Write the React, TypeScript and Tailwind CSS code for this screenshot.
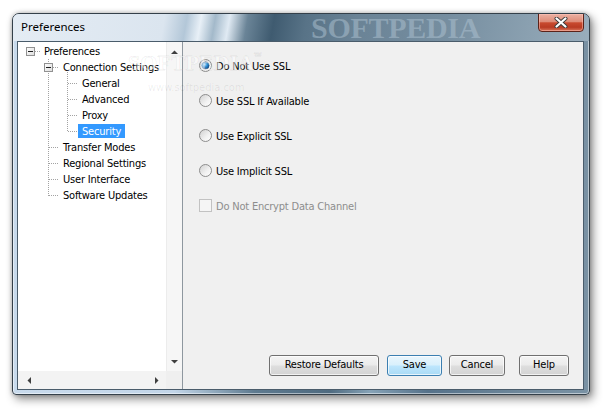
import React from "react";

type Row = { label: string; level: 0 | 1 | 2; selected?: boolean };

const rows: Row[] = [
  { label: "Preferences", level: 0 },
  { label: "Connection Settings", level: 1 },
  { label: "General", level: 2 },
  { label: "Advanced", level: 2 },
  { label: "Proxy", level: 2 },
  { label: "Security", level: 2, selected: true },
  { label: "Transfer Modes", level: 1 },
  { label: "Regional Settings", level: 1 },
  { label: "User Interface", level: 1 },
  { label: "Software Updates", level: 1 },
];

const levelPad = ["pl-[22px]", "pl-[41px]", "pl-[60px]"];

function TreeLines() {
  const dot = { stroke: "#a3a3a3", strokeWidth: 1, strokeDasharray: "1 1" };
  const box = (cx: number, cy: number) => (
    <g>
      <rect x={cx - 3.5} y={cy - 3.5} width={8} height={8} fill="url(#boxg)" stroke="#919191" />
      <line x1={cx - 2} x2={cx + 3} y1={cy + 0.5} y2={cy + 0.5} stroke="#1e1e1e" />
    </g>
  );
  return (
    <svg className="absolute inset-0 pointer-events-none" width="148" height="329">
      <defs>
        <linearGradient id="boxg" x1="0" y1="0" x2="1" y2="1">
          <stop offset="0" stopColor="#ffffff" />
          <stop offset="1" stopColor="#dcdcdc" />
        </linearGradient>
      </defs>
      <line x1={17} x2={22} y1={9.5} y2={9.5} {...dot} />
      <line x1={30.5} x2={30.5} y1={17} y2={154} {...dot} />
      {[105, 121, 137, 153].map((y) => (
        <line key={y} x1={31} x2={41} y1={y + 0.5} y2={y + 0.5} {...dot} />
      ))}
      <line x1={35} x2={41} y1={25.5} y2={25.5} {...dot} />
      <line x1={49.5} x2={49.5} y1={30} y2={90} {...dot} />
      {[41, 57, 73, 89].map((y) => (
        <line key={y} x1={50} x2={60} y1={y + 0.5} y2={y + 0.5} {...dot} />
      ))}
      {box(12, 9)}
      {box(30, 25)}
    </svg>
  );
}

function Radio({ checked }: { checked?: boolean }) {
  return (
    <svg width="13" height="13" viewBox="0 0 13 13" className="shrink-0">
      <defs>
        <linearGradient id="rbg" x1="0" y1="0" x2="1" y2="1">
          <stop offset="0" stopColor="#cfcfcf" />
          <stop offset="0.6" stopColor="#f2f2f2" />
          <stop offset="1" stopColor="#ffffff" />
        </linearGradient>
        <radialGradient id="rdot" cx="0.4" cy="0.35" r="0.75">
          <stop offset="0" stopColor="#b4e6ff" />
          <stop offset="0.45" stopColor="#2b8fd6" />
          <stop offset="1" stopColor="#0c3e78" />
        </radialGradient>
      </defs>
      <circle cx="6.5" cy="6.5" r="6" fill="url(#rbg)" stroke="#8d8d8d" />
      {checked && <circle cx="6.5" cy="6.5" r="3.6" fill="url(#rdot)" stroke="#1a4a7c" strokeWidth="0.6" />}
    </svg>
  );
}

function Btn({ children, className }: { children: React.ReactNode; className: string }) {
  return (
    <div
      className={
        "h-[21px] flex items-center justify-center rounded-[3px] text-[11px] tracking-[-0.2px] text-black shadow-[inset_0_0_0_1px_rgba(255,255,255,0.7)] " +
        className
      }
    >
      {children}
    </div>
  );
}

function Arrow({ dir }: { dir: "up" | "down" | "left" | "right" }) {
  const pts = {
    up: "0,4 7,4 3.5,0.5",
    down: "0,0 7,0 3.5,3.5",
    left: "4,0 4,7 0.5,3.5",
    right: "0,0 0,7 3.5,3.5",
  }[dir];
  const vert = dir === "up" || dir === "down";
  return (
    <svg width={vert ? 7 : 4} height={vert ? 4 : 7} className="shrink-0">
      <polygon points={pts} fill="#3f3f3f" />
    </svg>
  );
}

export default function App() {
  return (
    <div className="w-[611px] h-[417px] bg-white pl-[12px] pt-[13px] font-['DejaVu_Sans_Condensed','DejaVu_Sans',sans-serif]">
      <div className="relative w-[578px] h-[382px] rounded-t-[7px] rounded-b-[4px] border border-[#34404a] flex flex-col overflow-hidden bg-[linear-gradient(to_right,#c8daec_0%,#c2d5e8_28%,#9fb6c9_33%,#5e7a8f_42%,#4f6b80_55%,#86a2b6_62%,#56728a_72%,#6e879a_88%,#7a92a4_100%)] shadow-[3px_4px_10px_rgba(0,0,0,0.45),0_0_4px_rgba(0,0,0,0.25),inset_0_0_0_1px_rgba(255,255,255,0.5)]">
        {/* title bar */}
        <div className="relative h-[27px] shrink-0 flex items-start justify-between pl-[8px] pr-[5px] overflow-hidden bg-[linear-gradient(100deg,#e4ecf4_0px,#dbe5ef_150px,#b3c7d8_172px,#e8f0f7_186px,#a3b9ca_200px,#e0eaf3_214px,#6a8497_232px,#3f5b70_258px,#587387_290px,#6a8396_340px,#768ea0_430px,#8aa0b0_510px,#9aaebd_578px)]">
          <span className="absolute left-[298px] top-0 font-['Liberation_Serif',serif] font-bold text-[30px] leading-[27px] tracking-[-0.3px] text-[rgba(175,195,210,0.5)]">
            SOFTPEDIA
          </span>
          <span className="relative mt-[5px] text-[11.5px] leading-[16px] text-black font-['Noto_Sans',sans-serif]">
            Preferences
          </span>
          <div className="relative -mt-px w-[46px] h-[19px] rounded-b-[4px] border border-[#5b2219] flex items-center justify-center bg-[linear-gradient(#ebb0a2_0%,#de8c78_45%,#c84a2f_52%,#b93b23_78%,#d9765c_100%)] shadow-[inset_0_0_0_1px_rgba(255,200,190,0.5)]">
            <svg width="14" height="11" viewBox="0 0 14 11">
              <path d="M2.5 1.5 L11.5 9.5 M11.5 1.5 L2.5 9.5" stroke="#3b3b3b" strokeWidth="4" strokeLinecap="round" />
              <path d="M2.5 1.5 L11.5 9.5 M11.5 1.5 L2.5 9.5" stroke="#ffffff" strokeWidth="2.2" strokeLinecap="round" />
            </svg>
          </div>
        </div>

        {/* content */}
        <div className="relative flex-1 ml-[4px] mr-[5px] mb-[4px] border border-[#4a5c6b] bg-[#f0f0f0] flex min-h-0">
          {/* tree */}
          <div className="w-[165px] shrink-0 border-r border-[#8e979f] bg-white flex flex-col">
            <div className="flex-1 flex min-h-0">
              <div className="relative flex-1 pt-[1px] text-[11px] tracking-[-0.2px] text-black">
                <TreeLines />
                {rows.map((r) => (
                  <div key={r.label} className={"relative h-[16px] flex items-center " + levelPad[r.level]}>
                    <span
                      className={
                        "h-[14px] leading-[15px] px-[4px] whitespace-nowrap " +
                        (r.selected ? "bg-[#3399ff] text-white" : "")
                      }
                    >
                      {r.label}
                    </span>
                  </div>
                ))}
              </div>
              <div className="w-[16px] bg-[#f6f6f6] border-l border-[#ececec] flex flex-col items-center justify-between pt-[8px] pb-[7px]">
                <Arrow dir="up" />
                <Arrow dir="down" />
              </div>
            </div>
            <div className="h-[18px] flex">
              <div className="flex-1 bg-[#f3f3f3] flex items-center justify-between pl-[9px] pr-[7px]">
                <Arrow dir="left" />
                <Arrow dir="right" />
              </div>
              <div className="w-[16px] bg-[#efefef]" />
            </div>
          </div>

          {/* right panel */}
          <div className="flex-1 flex flex-col pl-[16px] pt-[17px] text-[11px] tracking-[-0.2px] text-black">
            <div className="flex flex-col gap-[22px]">
              {["Do Not Use SSL", "Use SSL If Available", "Use Explicit SSL", "Use Implicit SSL"].map((t, i) => (
                <div key={t} className="h-[13px] flex items-center gap-[4px]">
                  <Radio checked={i === 0} />
                  <span className="whitespace-nowrap leading-[15px] pt-px">{t}</span>
                </div>
              ))}
              <div className="h-[13px] flex items-center gap-[4px]">
                <div className="w-[13px] h-[13px] border border-[#c2c2c2] bg-[#f5f5f5] shrink-0" />
                <span className="whitespace-nowrap leading-[15px] pt-px text-[#8d8d8d]">Do Not Encrypt Data Channel</span>
              </div>
            </div>
            <div className="mt-auto flex justify-end pr-[14px] pb-[13px]">
              <Btn className="w-[110px] border border-[#707070] bg-[linear-gradient(#f4f4f4_0%,#ebebeb_48%,#dedede_52%,#d3d3d3_100%)]">
                Restore Defaults
              </Btn>
              <Btn className="ml-[8px] w-[55px] border border-[#3c7fb1] bg-[linear-gradient(#eaf6fd_0%,#d9f0fc_48%,#bee6fd_52%,#a9daf5_100%)]">
                Save
              </Btn>
              <Btn className="ml-[7px] w-[56px] border border-[#707070] bg-[linear-gradient(#f4f4f4_0%,#ebebeb_48%,#dedede_52%,#d3d3d3_100%)]">
                Cancel
              </Btn>
              <Btn className="ml-[14px] w-[50px] border border-[#707070] bg-[linear-gradient(#f4f4f4_0%,#ebebeb_48%,#dedede_52%,#d3d3d3_100%)]">
                Help
              </Btn>
            </div>
          </div>

          {/* watermark */}
          <div className="absolute left-[110px] top-[10px] pointer-events-none font-['Liberation_Serif',serif] font-bold text-[22px] leading-none text-[rgba(255,255,255,0.5)] [-webkit-text-stroke:1px_rgba(0,0,0,0.06)]">
            SOFTPEDIA<span className="text-[8px] align-top">™</span>
          </div>
          <div className="absolute left-[130px] top-[40px] pointer-events-none text-[11px] leading-none text-[rgba(0,0,0,0.08)]">
            www.softpedia.com
          </div>
        </div>
      </div>
    </div>
  );
}
